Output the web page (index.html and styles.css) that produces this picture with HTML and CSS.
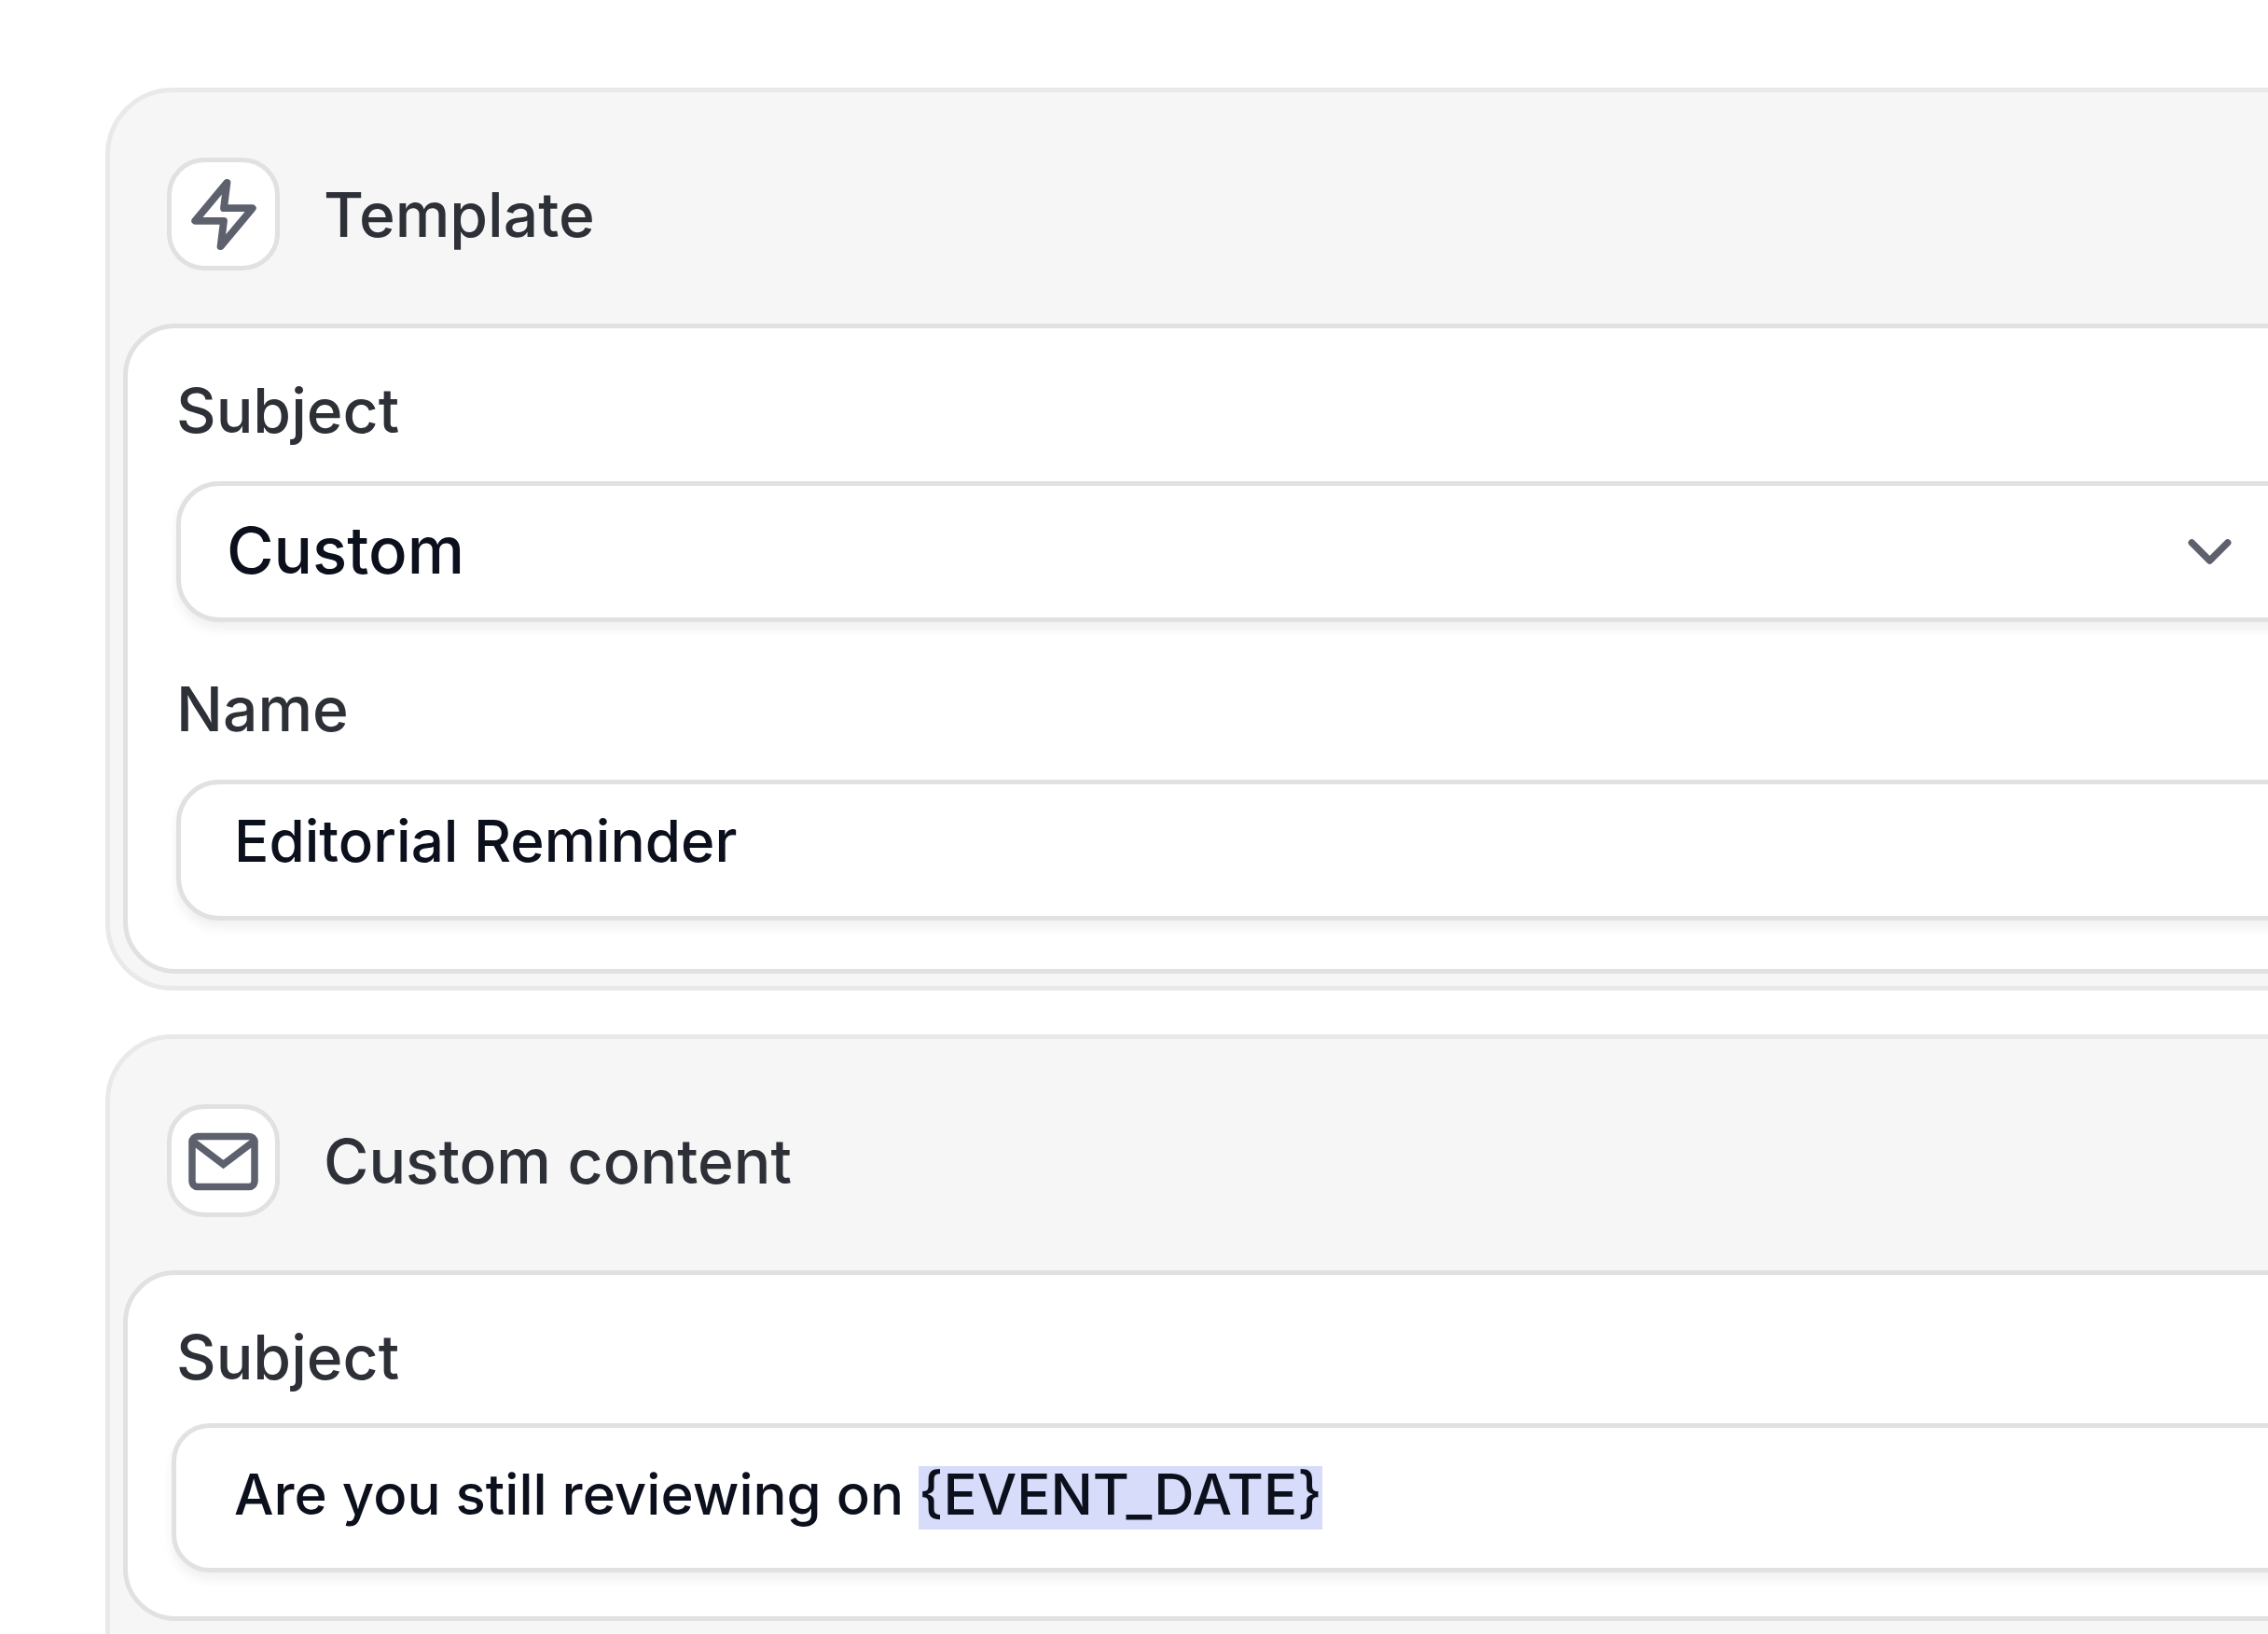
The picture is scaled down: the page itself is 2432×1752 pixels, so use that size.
FILE: index.html
```html
<!DOCTYPE html>
<html lang="en">
<head>
    <meta charset="UTF-8">
    <meta name="viewport" content="width=device-width, initial-scale=1.0">
    <title>Template</title>
    <link rel="stylesheet" href="styles.css">
</head>
<body>
    <main class="page">

        <!-- Template -->
        <section class="card">
            <header class="card-header">
                <span class="card-icon">
                    <svg viewBox="0 0 24 24" aria-hidden="true">
                        <polygon points="13 2 3 14 12 14 11 22 21 10 12 10 13 2"/>
                    </svg>
                </span>
                <h2>Template</h2>
            </header>
            <div class="card-body">
                <div class="field">
                    <label for="template-subject">Subject</label>
                    <div class="select">
                        <select id="template-subject">
                            <option selected>Custom</option>
                        </select>
                        <svg class="chevron" viewBox="0 0 24 24" aria-hidden="true">
                            <polyline points="6 9 12 15 18 9"/>
                        </svg>
                    </div>
                </div>
                <div class="field">
                    <label for="template-name">Name</label>
                    <input id="template-name" class="control text-input" type="text" value="Editorial Reminder">
                </div>
            </div>
        </section>

        <!-- Custom content -->
        <section class="card card-open">
            <header class="card-header">
                <span class="card-icon">
                    <svg class="mail" viewBox="0 0 82 82" aria-hidden="true">
                        <rect x="7" y="14.5" width="67" height="54" rx="6"/>
                        <polyline points="7.5 19.5 40.5 44.5 73.5 19.5"/>
                    </svg>
                </span>
                <h2>Custom content</h2>
            </header>
            <div class="card-body">
                <div class="field">
                    <span class="label" id="content-subject">Subject</span>
                    <div class="control editor" contenteditable="true" role="textbox" aria-labelledby="content-subject" spellcheck="false"><p>Are you still reviewing on <mark>{EVENT_DATE}</mark></p></div>
                </div>
            </div>
        </section>

    </main>
</body>
</html>
```

FILE: styles.css
```css
* { box-sizing: border-box; }

body {
    margin: 0;
    background: #fff;
    color: #2d3036;
    font-family: Inter, "Liberation Sans", sans-serif;
    font-size: 66px;
    font-weight: 500;
    line-height: 80px;
}

/* the cards run on past the right and bottom edge of the window */
.page {
    display: flex;
    flex-direction: column;
    gap: 47px;
    height: 100vh;
    padding: 94px 0 0 113px;
    overflow: hidden;
}

.card {
    flex: none;
    margin-right: -200px;
    padding: 0 14px 13px;
    border: 5px solid #e9e9e9;
    border-radius: 72px;
    background: #f6f6f6;
}
.card-open { padding-bottom: 120px; }

.card-header {
    display: flex;
    align-items: center;
    gap: 47px;
    padding: 70px 47px 57px;
}
.card-header h2 { margin: 0; font-size: 66px; font-weight: 500; }

.card-icon {
    display: flex;
    align-items: center;
    justify-content: center;
    width: 121px;
    height: 121px;
    border: 5px solid #e1e1e1;
    border-radius: 40px;
    background: #fff;
}
.card-icon svg { width: 82px; height: 82px; }

svg {
    fill: none;
    stroke: #5d616d;
    stroke-width: 2.3;
    stroke-linecap: round;
    stroke-linejoin: round;
}
.mail { stroke-width: 7.5; stroke-linejoin: miter; }

.card-body {
    display: flex;
    flex-direction: column;
    gap: 53px;
    padding: 48px 52px 52px;
    border: 5px solid #e1e1e1;
    border-radius: 56px;
    background: #fff;
}

.field { display: flex; flex-direction: column; gap: 36px; }

/* Controls */
.control, .select select {
    width: 100%;
    height: 151px;
    margin: 0;
    border: 5px solid #e1e1e1;
    border-radius: 46px;
    outline: none;
    background: #fff;
    box-shadow: 0 8px 12px rgba(0, 0, 0, 0.06);
    color: #0c101c;
    font-family: inherit;
    font-size: 62px;
    font-weight: 500;
}

.select { position: relative; }
.select select {
    display: block;
    padding: 0 230px 4px 49px;
    appearance: none;
    font-size: 69px;
}
.chevron {
    position: absolute;
    top: 37px;
    right: 148px;
    width: 77px;
    height: 77px;
    pointer-events: none;
}

.text-input { padding: 0 57px 20px; }

.editor {
    width: auto;
    height: 160px;
    margin: -5px;
    padding: 31px 62px;
    border-radius: 41px;
    font-size: 60px;
    white-space: nowrap;
}
.editor p { margin: 0; }
.editor mark {
    display: inline-block;
    padding-bottom: 8px;
    background: #d6dcf9;
    color: inherit;
    line-height: 60px;
}
```
